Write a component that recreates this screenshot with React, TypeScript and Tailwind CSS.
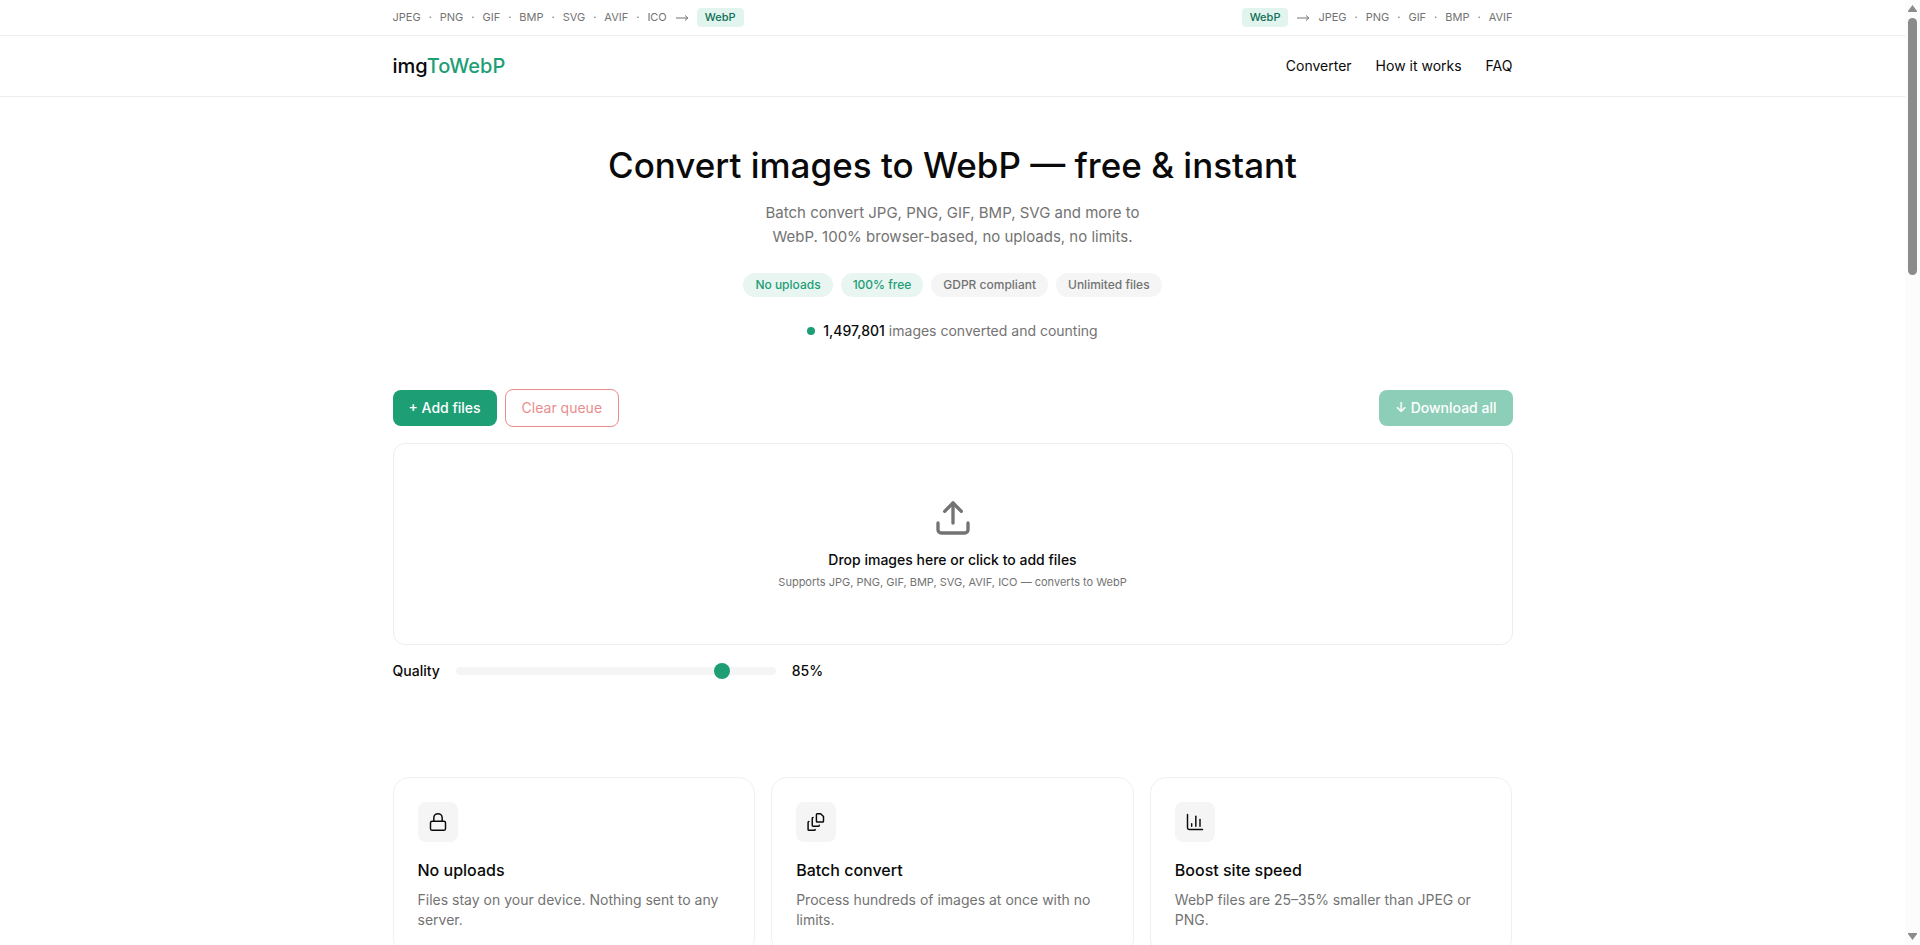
import { useState } from "react";
import { ChartColumn, Lock, Upload } from "lucide-react";

const INPUT_FORMATS = ["JPEG", "PNG", "GIF", "BMP", "SVG", "AVIF", "ICO"];
const OUTPUT_FORMATS = ["JPEG", "PNG", "GIF", "BMP", "AVIF"];

const PILLS = [
  { label: "No uploads", highlight: true },
  { label: "100% free", highlight: true },
  { label: "GDPR compliant", highlight: false },
  { label: "Unlimited files", highlight: false },
];

const FEATURES = [
  {
    icon: <Lock size={20} strokeWidth={1.75} />,
    title: "No uploads",
    text: "Files stay on your device. Nothing sent to any server.",
  },
  {
    icon: <PagesIcon />,
    title: "Batch convert",
    text: "Process hundreds of images at once with no limits.",
  },
  {
    icon: <ChartColumn size={20} strokeWidth={1.75} />,
    title: "Boost site speed",
    text: "WebP files are 25–35% smaller than JPEG or PNG.",
  },
];

function PagesIcon() {
  return (
    <svg
      width="20"
      height="20"
      viewBox="0 0 24 24"
      fill="none"
      stroke="currentColor"
      strokeWidth="1.75"
      strokeLinecap="round"
      strokeLinejoin="round"
      aria-hidden="true"
    >
      <path d="M13.5 2h4L21 5.5V11a1 1 0 0 1-1 1h-6.5a1 1 0 0 1-1-1V3a1 1 0 0 1 1-1Z" />
      <path d="M8.5 6.5a1 1 0 0 0-1 1V16a1 1 0 0 0 1 1H15a1 1 0 0 0 1-1" />
      <path d="M3.5 11.5a1 1 0 0 0-1 1V21a1 1 0 0 0 1 1H10a1 1 0 0 0 1-1" />
    </svg>
  );
}

function LongArrow() {
  return (
    <svg width="14" height="8" viewBox="0 0 14 8" fill="none" stroke="currentColor" aria-label="to">
      <path d="M1 4h12M10 1.5 12.8 4 10 6.500" />
    </svg>
  );
}

function FormatList({ formats }: { formats: string[] }) {
  return (
    <>
      {formats.map((format, index) => (
        <span key={format} className="flex gap-2">
          {index > 0 && <span>·</span>}
          <span>{format}</span>
        </span>
      ))}
    </>
  );
}

function WebpBadge() {
  return (
    <span className="rounded bg-[#e1f5ee] px-2 text-[11px] leading-[19px] font-medium text-[#0f6e56]">
      WebP
    </span>
  );
}

function Scrollbar() {
  return (
    <div
      aria-hidden="true"
      className="flex h-full w-[15px] shrink-0 flex-col items-center justify-between bg-[#fcfcfc] py-[5px]"
    >
      <div className="flex flex-col items-center gap-1.5">
        <svg width="9" height="7" viewBox="0 0 9 7" fill="#8b8b8b">
          <path d="M4.5 0 9 6v1H0V6Z" />
        </svg>
        <div className="h-[257px] w-[9px] rounded-full bg-[#8b8b8b]" />
      </div>
      <svg width="9" height="7" viewBox="0 0 9 7" fill="#8b8b8b">
        <path d="M4.5 7 0 1V0h9v1Z" />
      </svg>
    </div>
  );
}

export default function App() {
  const [quality, setQuality] = useState(85);

  return (
    <div className="flex h-screen bg-white font-[Inter,sans-serif] text-[#0a0a0a]">
      <div className="min-w-0 flex-1 overflow-y-auto [scrollbar-width:none]">
        <div className="border-b border-[#ededed]">
          <div className="mx-auto flex h-[35px] max-w-[1120px] items-center justify-between text-[11px] text-[#737373]">
            <div className="flex items-center gap-2">
              <FormatList formats={INPUT_FORMATS} />
              <LongArrow />
              <WebpBadge />
            </div>
            <div className="flex items-center gap-2">
              <WebpBadge />
              <LongArrow />
              <FormatList formats={OUTPUT_FORMATS} />
            </div>
          </div>
        </div>

        <header className="border-b border-[#ededed]">
          <div className="mx-auto flex h-[60px] max-w-[1120px] items-center justify-between">
            <a href="#" className="text-xl font-medium">
              img<span className="text-[#1d9e75]">ToWebP</span>
            </a>
            <nav className="flex gap-6 text-sm">
              <a href="#converter">Converter</a>
              <a href="#how">How it works</a>
              <a href="#faq">FAQ</a>
            </nav>
          </div>
        </header>

        <main className="mx-auto max-w-[1120px]">
          <section className="flex flex-col items-center pt-12 text-center">
            <h1 className="text-[35px] leading-10 font-medium">Convert images to WebP — free & instant</h1>
            <p className="mt-4 max-w-[390px] text-[15px] leading-6 text-[#737373]">
              Batch convert JPG, PNG, GIF, BMP, SVG and more to WebP. 100% browser-based, no uploads, no limits.
            </p>
            <ul className="mt-6 flex gap-2">
              {PILLS.map((pill) => (
                <li
                  key={pill.label}
                  className={
                    pill.highlight
                      ? "rounded-full bg-[#e8f5f1] px-3 py-1 text-xs font-medium text-[#1d9e75]"
                      : "rounded-full bg-[#f5f5f5] px-3 py-1 text-xs font-medium text-[#737373]"
                  }
                >
                  {pill.label}
                </li>
              ))}
            </ul>
            <p className="mt-6 flex items-center gap-2 text-sm text-[#737373]">
              <span className="size-2 rounded-full bg-[#1d9e75]" />
              <span>
                <strong className="font-medium text-[#0a0a0a]">1,497,801</strong> images converted and counting
              </span>
            </p>
          </section>

          <section id="converter" className="pt-12">
            <div className="flex items-center justify-between">
              <div className="flex items-center gap-2">
                <button type="button" className="h-9 rounded-lg bg-[#1d9e75] px-4 text-sm font-medium text-white">
                  + Add files
                </button>
                <button
                  type="button"
                  disabled
                  className="h-[38px] rounded-lg border border-[#d9403f] px-4 text-sm text-[#d9403f] opacity-60"
                >
                  Clear queue
                </button>
              </div>
              <button
                type="button"
                disabled
                className="h-9 rounded-lg bg-[#1d9e75] px-4 text-sm font-medium text-white opacity-50"
              >
                ↓ Download all
              </button>
            </div>

            <button
              type="button"
              className="mt-4 flex w-full flex-col items-center rounded-xl border border-[#ededed] px-6 py-[54px]"
            >
              <Upload size={40} className="text-[#737373]" />
              <span className="mt-3 text-sm font-medium">Drop images here or click to add files</span>
              <span className="mt-1 text-[11px] leading-4 text-[#737373]">
                Supports JPG, PNG, GIF, BMP, SVG, AVIF, ICO — converts to WebP
              </span>
            </button>

            <div className="mt-4 flex items-center gap-4 text-sm font-medium">
              <label htmlFor="quality">Quality</label>
              <input
                id="quality"
                type="range"
                min={0}
                max={100}
                value={quality}
                onChange={(event) => setQuality(Number(event.target.value))}
                className="h-2 w-80 appearance-none rounded-full bg-[#f5f5f5] [&::-webkit-slider-thumb]:size-4 [&::-webkit-slider-thumb]:appearance-none [&::-webkit-slider-thumb]:rounded-full [&::-webkit-slider-thumb]:bg-[#1d9e75]"
              />
              <output htmlFor="quality">{quality}%</output>
            </div>
          </section>

          <section className="grid grid-cols-3 gap-4 pt-24 pb-16">
            {FEATURES.map((feature) => (
              <article key={feature.title} className="rounded-2xl border border-[#f0f0f0] p-6">
                <div className="flex size-10 items-center justify-center rounded-lg bg-[#f5f5f5]">{feature.icon}</div>
                <h2 className="mt-4 text-base leading-6 font-medium">{feature.title}</h2>
                <p className="mt-2 text-sm leading-5 text-[#737373]">{feature.text}</p>
              </article>
            ))}
          </section>
        </main>
      </div>
      <Scrollbar />
    </div>
  );
}
